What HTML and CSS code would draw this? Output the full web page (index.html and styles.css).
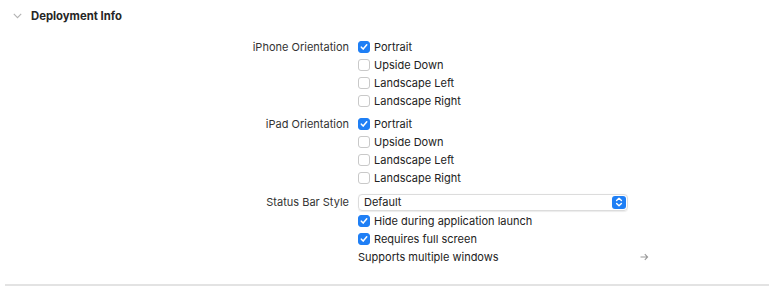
FILE: index.html
```html
<!DOCTYPE html>
<html lang="en">
<head>
    <meta charset="UTF-8">
    <title>Deployment Info</title>
    <link rel="stylesheet" href="styles.css">
</head>
<body>
    <div class="section">
        <div class="section-head">
            <svg class="chevron" width="9" height="6" viewBox="0 0 9 6"><path d="M0.8 0.8 L4.5 4.6 L8.2 0.8" fill="none" stroke="#b3b3b3" stroke-width="1.1"/></svg>
            <span class="section-title">Deployment Info</span>
        </div>

        <div class="form">
            <div class="label">iPhone Orientation</div>
            <div class="options">
                <label class="opt"><span class="box checked"><svg width="12" height="12" viewBox="0 0 12 12"><path d="M2.8 6.2 L5 8.5 L9.3 3.3" fill="none" stroke="#fff" stroke-width="1.8" stroke-linecap="round" stroke-linejoin="round"/></svg></span>Portrait</label>
                <label class="opt"><span class="box"></span>Upside Down</label>
                <label class="opt"><span class="box"></span>Landscape Left</label>
                <label class="opt"><span class="box"></span>Landscape Right</label>
            </div>

            <div class="label">iPad Orientation</div>
            <div class="options">
                <label class="opt"><span class="box checked"><svg width="12" height="12" viewBox="0 0 12 12"><path d="M2.8 6.2 L5 8.5 L9.3 3.3" fill="none" stroke="#fff" stroke-width="1.8" stroke-linecap="round" stroke-linejoin="round"/></svg></span>Portrait</label>
                <label class="opt"><span class="box"></span>Upside Down</label>
                <label class="opt"><span class="box"></span>Landscape Left</label>
                <label class="opt"><span class="box"></span>Landscape Right</label>
            </div>

            <div class="label label-popup">Status Bar Style</div>
            <div class="options">
                <div class="popup-row">
                    <div class="popup">
                        <span>Default</span>
                        <span class="stepper"><svg width="14" height="14" viewBox="0 0 14 14"><path d="M4.6 5.6 L7 3.3 L9.4 5.6 M4.6 8.4 L7 10.7 L9.4 8.4" fill="none" stroke="#fff" stroke-width="1.4" stroke-linecap="round" stroke-linejoin="round"/></svg></span>
                    </div>
                </div>
                <label class="opt"><span class="box checked"><svg width="12" height="12" viewBox="0 0 12 12"><path d="M2.8 6.2 L5 8.5 L9.3 3.3" fill="none" stroke="#fff" stroke-width="1.8" stroke-linecap="round" stroke-linejoin="round"/></svg></span>Hide during application launch</label>
                <label class="opt"><span class="box checked"><svg width="12" height="12" viewBox="0 0 12 12"><path d="M2.8 6.2 L5 8.5 L9.3 3.3" fill="none" stroke="#fff" stroke-width="1.8" stroke-linecap="round" stroke-linejoin="round"/></svg></span>Requires full screen</label>
                <div class="opt link-row">
                    <span>Supports multiple windows</span>
                    <svg class="arrow" width="9" height="8" viewBox="0 0 9 8"><path d="M0.5 4 H7.5 M4.8 1.2 L7.6 4 L4.8 6.8" fill="none" stroke="#9a9a9a" stroke-width="1.1"/></svg>
                </div>
            </div>
        </div>
    </div>
    <div class="divider"></div>
</body>
</html>
```

FILE: styles.css
```css
body {
    margin: 0;
    padding: 0;
    background: #ffffff;
    font-family: 'Inter', 'Liberation Sans', sans-serif;
    font-size: 11px;
    color: #262626;
    width: 769px;
    height: 287px;
    overflow: hidden;
}
.section-head {
    display: flex;
    align-items: center;
    height: 32px;
    padding-left: 13px;
}
.chevron {
    margin-right: 9px;
}
.section-title {
    font-weight: 700;
    font-size: 11.3px;
    color: #262626;
}
.form {
    display: grid;
    grid-template-columns: 358px 1fr;
    padding-top: 6px;
    row-gap: 5px;
}
.label {
    text-align: right;
    padding-right: 9px;
    line-height: 18px;
    color: #333;
}
.label-popup {
    line-height: 20px;
}
.options {
    display: flex;
    flex-direction: column;
}
.opt {
    display: flex;
    align-items: center;
    height: 18px;
    color: #222;
}
.box {
    width: 12px;
    height: 12px;
    box-sizing: border-box;
    border: 1px solid #c9c9c9;
    border-radius: 3px;
    background: #fff;
    margin-right: 4px;
    display: flex;
    align-items: center;
    justify-content: center;
}
.box.checked {
    background: #1f7ff5;
    border-color: #1f7ff5;
}
.box svg {
    display: block;
}
.popup-row {
    height: 20px;
    display: flex;
    align-items: center;
}
.popup {
    width: 270px;
    height: 17px;
    box-sizing: border-box;
    border: 1px solid #dcdcdc;
    border-radius: 4px;
    box-shadow: 0 0.5px 1px rgba(0, 0, 0, 0.08);
    display: flex;
    align-items: center;
    justify-content: space-between;
    padding-left: 5px;
    padding-right: 1px;
    color: #222;
}
.stepper {
    width: 14px;
    height: 13px;
    border-radius: 3px;
    background: #1f7ff5;
    display: flex;
    align-items: center;
    justify-content: center;
}
.link-row {
    width: 291px;
    justify-content: space-between;
}
.divider {
    margin-top: 18px;
    margin-left: 5px;
    height: 2px;
    background: #e3e3e3;
}
```
